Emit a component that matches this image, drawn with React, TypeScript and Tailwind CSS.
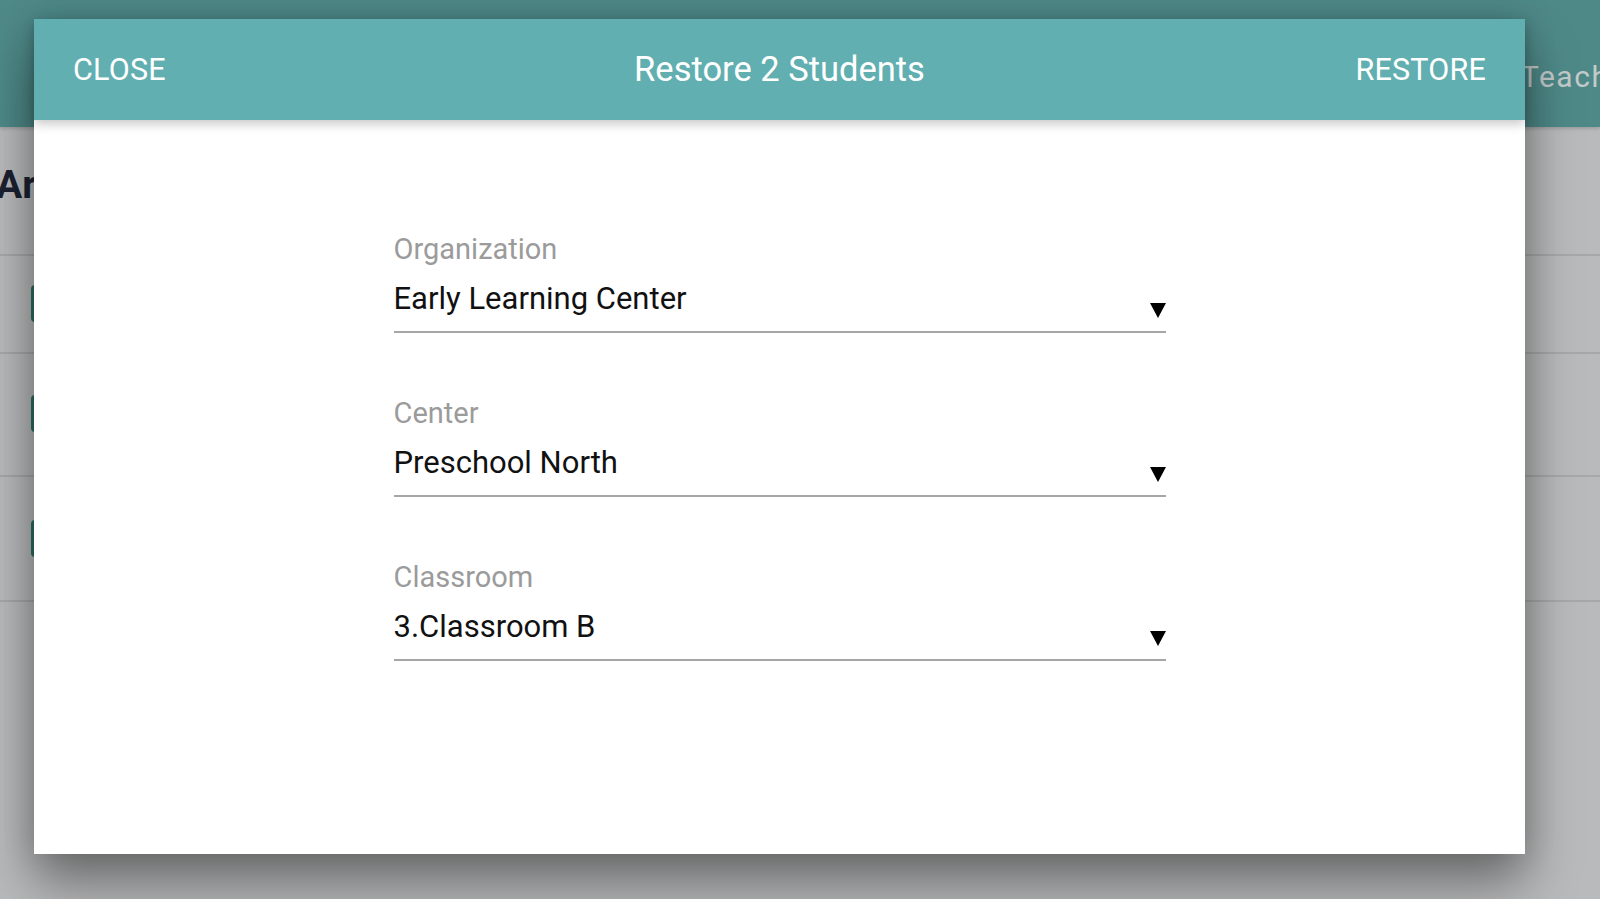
import React from "react";

type Field = { label: string; value: string };

const fields: Field[] = [
  { label: "Organization", value: "Early Learning Center" },
  { label: "Center", value: "Preschool North" },
  { label: "Classroom", value: "3.Classroom B" },
];

const rowTops = [254, 352, 475, 600];

function SelectField({ label, value }: Field) {
  return (
    <div className="flex flex-col">
      <div className="text-[29px] leading-[32px] text-[#9b9b9b]">{label}</div>
      <div className="flex items-end justify-between border-b-2 border-[#a6a6a6] pt-[14px] pb-[12px]">
        <span className="text-[31px] leading-[40px] text-[#111111]">{value}</span>
        <svg width="16" height="16" viewBox="0 0 16 16" className="mb-[1px]">
          <polygon points="0,1 16,1 8,16" fill="#000000" />
        </svg>
      </div>
    </div>
  );
}

export default function App() {
  return (
    <div
      className="relative w-[1600px] h-[899px] overflow-hidden bg-[#b9babb]"
      style={{ fontFamily: "Roboto, 'Liberation Sans', sans-serif" }}
    >
      {/* page behind the dialog */}
      <div className="flex h-[127px] items-center bg-[#4e8988] pl-[1521px] shadow-[0_2px_3px_rgba(0,0,0,0.15)]">
        <span className="mt-[26px] whitespace-nowrap text-[30px] tracking-[1.5px] text-[#c3cbca]">Teachers</span>
      </div>
      <div className="ml-[-4px] mt-[33px] text-[39px] font-bold leading-[50px] text-[#1b2130]">Archived Students</div>
      {rowTops.map((top, i) => (
        <div key={i} className="absolute left-0 right-0 h-[2px] bg-[#a7a8a9]" style={{ top }} />
      ))}
      {[285, 395, 520].map((top, i) => (
        <div key={i} className="absolute left-[31px] h-[37px] w-[37px] rounded-[4px] bg-[#2f6d67]" style={{ top }} />
      ))}

      {/* dialog */}
      <div className="absolute left-[34px] top-[19px] flex h-[835px] w-[1491px] flex-col bg-white shadow-[0_30px_50px_rgba(0,0,0,0.4),0_0_30px_rgba(0,0,0,0.15)]">
        <div className="relative z-10 grid h-[101px] grid-cols-[1fr_auto_1fr] items-center bg-[#61afb0] px-[39px] text-white shadow-[0_4px_10px_rgba(0,0,0,0.22)]">
          <button className="justify-self-start text-[30.5px] tracking-[0.2px]">CLOSE</button>
          <h2 className="text-[34.5px] font-normal">Restore 2 Students</h2>
          <button className="justify-self-end text-[30.5px] tracking-[0.2px]">RESTORE</button>
        </div>
        <div className="mx-auto flex w-[772px] flex-col gap-[64px] pt-[113px]">
          {fields.map((f) => (
            <SelectField key={f.label} label={f.label} value={f.value} />
          ))}
        </div>
      </div>
    </div>
  );
}
